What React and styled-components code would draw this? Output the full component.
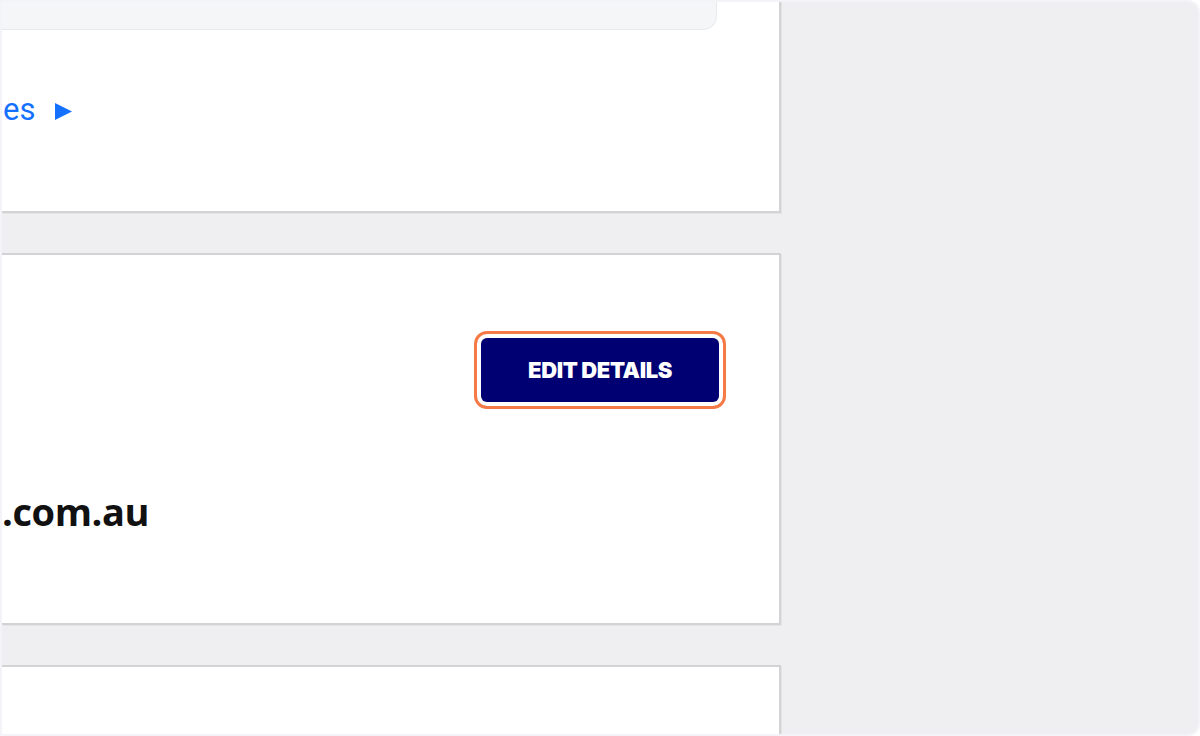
import React from "react";
import styled, { createGlobalStyle } from "styled-components";

const Global = createGlobalStyle`
  html, body { margin: 0; padding: 0; background: #ffffff; }
  body { font-family: "Roboto", "Liberation Sans", sans-serif; }
  * { box-sizing: border-box; }
`;

const Frame = styled.div`
  width: 1200px;
  height: 736px;
  background: #efeff2;
  border: 2px solid #f4f3f7;
  border-radius: 0 12px 12px 0;
  overflow: hidden;
  display: flex;
  align-items: flex-start;
`;

const Column = styled.main`
  width: 779px;
  display: flex;
  flex-direction: column;
  gap: 40px;
  margin-top: -2px;
`;

const Card = styled.section`
  background: #ffffff;
  border-right: 2px solid #d3d3d5;
  border-bottom: 2px solid #d3d3d5;
  border-top: ${(p) => (p.$top ? "2px solid #d3d3d5" : "none")};
  height: ${(p) => p.$h}px;
  display: flex;
  flex-direction: column;
  box-shadow: 1px 1px 0 #e4e4e6;
`;

const TabBar = styled.div`
  width: 715px;
  height: 30px;
  background: #f5f6f8;
  border-bottom: 1.5px solid #e8e9ec;
  border-right: 1.5px solid #e8e9ec;
  border-bottom-right-radius: 14px;
`;

const LinkRow = styled.a`
  display: flex;
  align-items: center;
  gap: 20px;
  margin-top: 60px;
  padding-left: 1px;
  color: #1470ff;
  font-family: "Roboto", "Liberation Sans", sans-serif;
  font-size: 31px;
  font-weight: 400;
  line-height: 40px;
  text-decoration: none;
  cursor: pointer;
`;

const Arrow = styled.svg`
  width: 17px;
  height: 17px;
  margin-top: 2px;
`;

const ButtonRow = styled.div`
  display: flex;
  justify-content: flex-end;
  padding: 83px 60px 0 0;
`;

const EditButton = styled.button`
  width: 238px;
  height: 64px;
  background: #000073;
  color: #ffffff;
  border: none;
  border-radius: 6px;
  font-family: "Inter", "Liberation Sans", sans-serif;
  font-weight: 900;
  font-size: 22px;
  letter-spacing: -0.4px;
  outline: 3px solid #f67a45;
  outline-offset: 4px;
  cursor: pointer;
`;

const Email = styled.div`
  margin-top: 86px;
  font-family: "Open Sans", "Liberation Sans", sans-serif;
  font-weight: 700;
  font-size: 38px;
  line-height: 46px;
  letter-spacing: -0.4px;
  color: #111111;
`;

export default function App() {
  return (
    <>
      <Global />
      <Frame>
        <Column>
          <Card $h={213}>
            <TabBar />
            <LinkRow>
              <span>es</span>
              <Arrow viewBox="0 0 17 17">
                <path d="M0 0 L17 8.5 L0 17 Z" fill="#1470ff" />
              </Arrow>
            </LinkRow>
          </Card>
          <Card $top $h={372}>
            <ButtonRow>
              <EditButton>EDIT DETAILS</EditButton>
            </ButtonRow>
            <Email>.com.au</Email>
          </Card>
          <Card $top $h={120} />
        </Column>
      </Frame>
    </>
  );
}
